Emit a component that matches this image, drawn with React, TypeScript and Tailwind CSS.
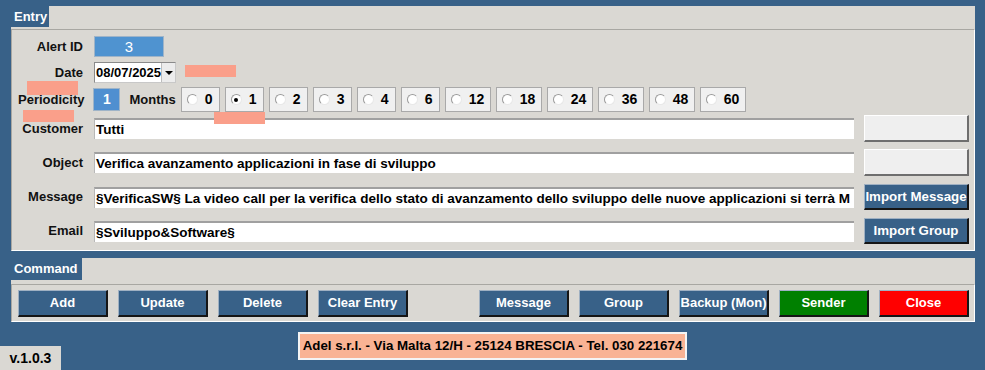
const MONTHS = ['0', '1', '2', '3', '4', '6', '12', '18', '24', '36', '48', '60'];

function Label({ text }: { text: string }) {
  return <div className="w-[71px] shrink-0 text-right text-[13px] font-bold text-[#111]">{text}</div>;
}

function Field({ value }: { value: string }) {
  return (
    <div className="ml-[11px] h-[21px] w-[760px] shrink-0 overflow-hidden whitespace-nowrap border-t-2 border-t-[#a0a0a0] border-l border-l-[#b8b8b8] bg-white pl-[1px] text-[13.5px] font-bold leading-[19px] text-black">
      {value}
    </div>
  );
}

function SideButton({ text }: { text?: string }) {
  if (text) {
    return (
      <button className="ml-[10px] h-[26px] w-[105px] border-t border-l border-r-2 border-b-2 border-t-[#9fb0c2] border-l-[#9fb0c2] border-r-[#151515] border-b-[#151515] bg-[#386188] text-[13.3px] font-bold text-white">
        {text}
      </button>
    );
  }
  return (
    <button className="ml-[10px] h-[27px] w-[105px] border-t border-l border-r-2 border-b-2 border-t-white border-l-white border-r-[#6e6e6e] border-b-[#6e6e6e] bg-[#efefef]" />
  );
}

function Radio({ label, checked }: { label: string; checked?: boolean }) {
  const wide = label.length > 1;
  return (
    <div
      className={`flex h-[25px] items-center border border-[#a9a9a9] bg-[#f0f0f0] pl-[5px] ${wide ? 'w-[46px]' : 'w-[39px]'}`}
    >
      <div className="flex h-[11px] w-[11px] items-center justify-center rounded-full border border-t-[#9a9a9a] border-l-[#9a9a9a] border-r-[#e8e8e8] border-b-[#e8e8e8] bg-white">
        {checked && <div className="h-[4px] w-[4px] rounded-full bg-black" />}
      </div>
      <span className="ml-[7px] text-[14px] font-bold text-black">{label}</span>
    </div>
  );
}

function CmdButton({ text, color = 'bg-[#386188]' }: { text: string; color?: string }) {
  return (
    <button
      className={`h-[27px] w-[90px] shrink-0 border-t border-l border-r-2 border-b-2 border-t-[#9fb0c2] border-l-[#9fb0c2] border-r-[#151515] border-b-[#151515] text-[13px] font-bold text-white ${color}`}
    >
      {text}
    </button>
  );
}

export default function App() {
  return (
    <div className="relative h-[370px] w-[985px] overflow-hidden bg-[#386188] font-['Liberation_Sans',Arial,sans-serif]">
      <div className="pl-[11px] pr-[10px] pt-[6px]">
        {/* Entry */}
        <div className="flex h-[21px]">
          <div className="w-[38px] pl-[3px] text-[13px] font-bold leading-[21px] text-white">Entry</div>
          <div className="flex-1 bg-[#dad8d3]" />
        </div>
        <div className="h-[2px] bg-[#dad8d3]" />
        <div className="relative h-[222px] border border-t-[#a8a7a2] border-l-[#a8a7a2] border-r-white border-b-white bg-[#dad8d3]">
          <div className="mt-[6px] flex h-[21px] items-center">
            <Label text="Alert ID" />
            <div className="ml-[11px] h-[21px] w-[70px] border border-[#9fb4c8] bg-[#4f93d0] text-center text-[15px] leading-[19px] text-white">3</div>
          </div>

          <div className="mt-[5px] flex h-[21px] items-center">
            <Label text="Date" />
            <div className="ml-[11px] flex h-[21px] w-[82px] border border-t-[#8a8a8a] border-l-[#8a8a8a] border-r-[#c8c8c8] border-b-[#c8c8c8] bg-white">
              <span className="pl-[1px] text-[13px] font-bold leading-[19px] text-black">08/07/2025</span>
              <div className="ml-auto flex w-[14px] items-center justify-center border-l border-[#bdbdbd] bg-[#ececec]">
                <div className="h-0 w-0 border-x-[4px] border-t-[4px] border-x-transparent border-t-black" />
              </div>
            </div>
          </div>

          <div className="mt-[4px] flex h-[25px] items-center">
            <div className="ml-[6px] text-[13px] font-bold text-[#111]">Periodicity</div>
            <div className="ml-[9px] h-[23px] w-[27px] border border-[#9fb4c8] bg-[#4f8fd0] text-center text-[14px] font-bold leading-[21px] text-white">1</div>
            <div className="ml-[9px] text-[13px] font-bold text-[#111]">Months</div>
            <div className="ml-[5px] flex gap-[5px]">
              {MONTHS.map((m) => (
                <Radio key={m} label={m} checked={m === '1'} />
              ))}
            </div>
          </div>

          <div className="mt-[3px] flex h-[27px] items-center">
            <Label text="Customer" />
            <Field value="Tutti" />
            <SideButton />
          </div>

          <div className="mt-[7px] flex h-[27px] items-center">
            <Label text="Object" />
            <Field value="Verifica avanzamento applicazioni in fase di sviluppo" />
            <SideButton />
          </div>

          <div className="mt-[8px] flex h-[26px] items-center">
            <Label text="Message" />
            <Field value="§VerificaSW§ La video call per la verifica dello stato di avanzamento dello sviluppo delle nuove applicazioni si terrà M" />
            <SideButton text="Import Message" />
          </div>

          <div className="mt-[8px] flex h-[26px] items-center">
            <Label text="Email" />
            <Field value="§Sviluppo&Software§" />
            <SideButton text="Import Group" />
          </div>

          {/* redaction marks */}
          <div className="absolute left-[173px] top-[35px] h-[12px] w-[51px] bg-[#fa9f8a]" />
          <div className="absolute left-[15px] top-[51px] h-[14px] w-[51px] bg-[#fa9f8a]" />
          <div className="absolute left-[11px] top-[80px] h-[12px] w-[51px] bg-[#fa9f8a]" />
          <div className="absolute left-[202px] top-[82px] h-[12px] w-[51px] bg-[#fa9f8a]" />
        </div>

        {/* Command */}
        <div className="mt-[7px] flex h-[22px]">
          <div className="w-[71px] pl-[3px] text-[13px] font-bold leading-[22px] text-white">Command</div>
          <div className="flex-1 bg-[#dad8d3]" />
        </div>
        <div className="h-[4px] bg-[#dad8d3]" />
        <div className="flex h-[38px] items-center border border-t-[#a8a7a2] border-l-[#a8a7a2] border-r-white border-b-white bg-[#dad8d3] pl-[6px]">
          <div className="flex gap-[10px]">
            <CmdButton text="Add" />
            <CmdButton text="Update" />
            <CmdButton text="Delete" />
            <CmdButton text="Clear Entry" />
          </div>
          <div className="ml-[71px] flex gap-[10px]">
            <CmdButton text="Message" />
            <CmdButton text="Group" />
            <CmdButton text="Backup (Mon)" />
            <CmdButton text="Sender" color="bg-[#008000]" />
            <CmdButton text="Close" color="bg-[#ff0000]" />
          </div>
        </div>
      </div>

      {/* footer */}
      <div className="grid h-[48px] grid-cols-[1fr_auto_1fr]">
        <div className="self-end">
          <div className="h-[24px] w-[61px] bg-[#dad8d3] text-center text-[14px] font-bold leading-[24px] text-black">v.1.0.3</div>
        </div>
        <div className="mt-[10px] h-[28px] w-[389px] border-2 border-[#f4f4f4] bg-[#f9b394] text-center text-[13.3px] font-bold leading-[24px] text-black">
          Adel s.r.l. - Via Malta 12/H - 25124 BRESCIA - Tel. 030 221674
        </div>
        <div />
      </div>
    </div>
  );
}
